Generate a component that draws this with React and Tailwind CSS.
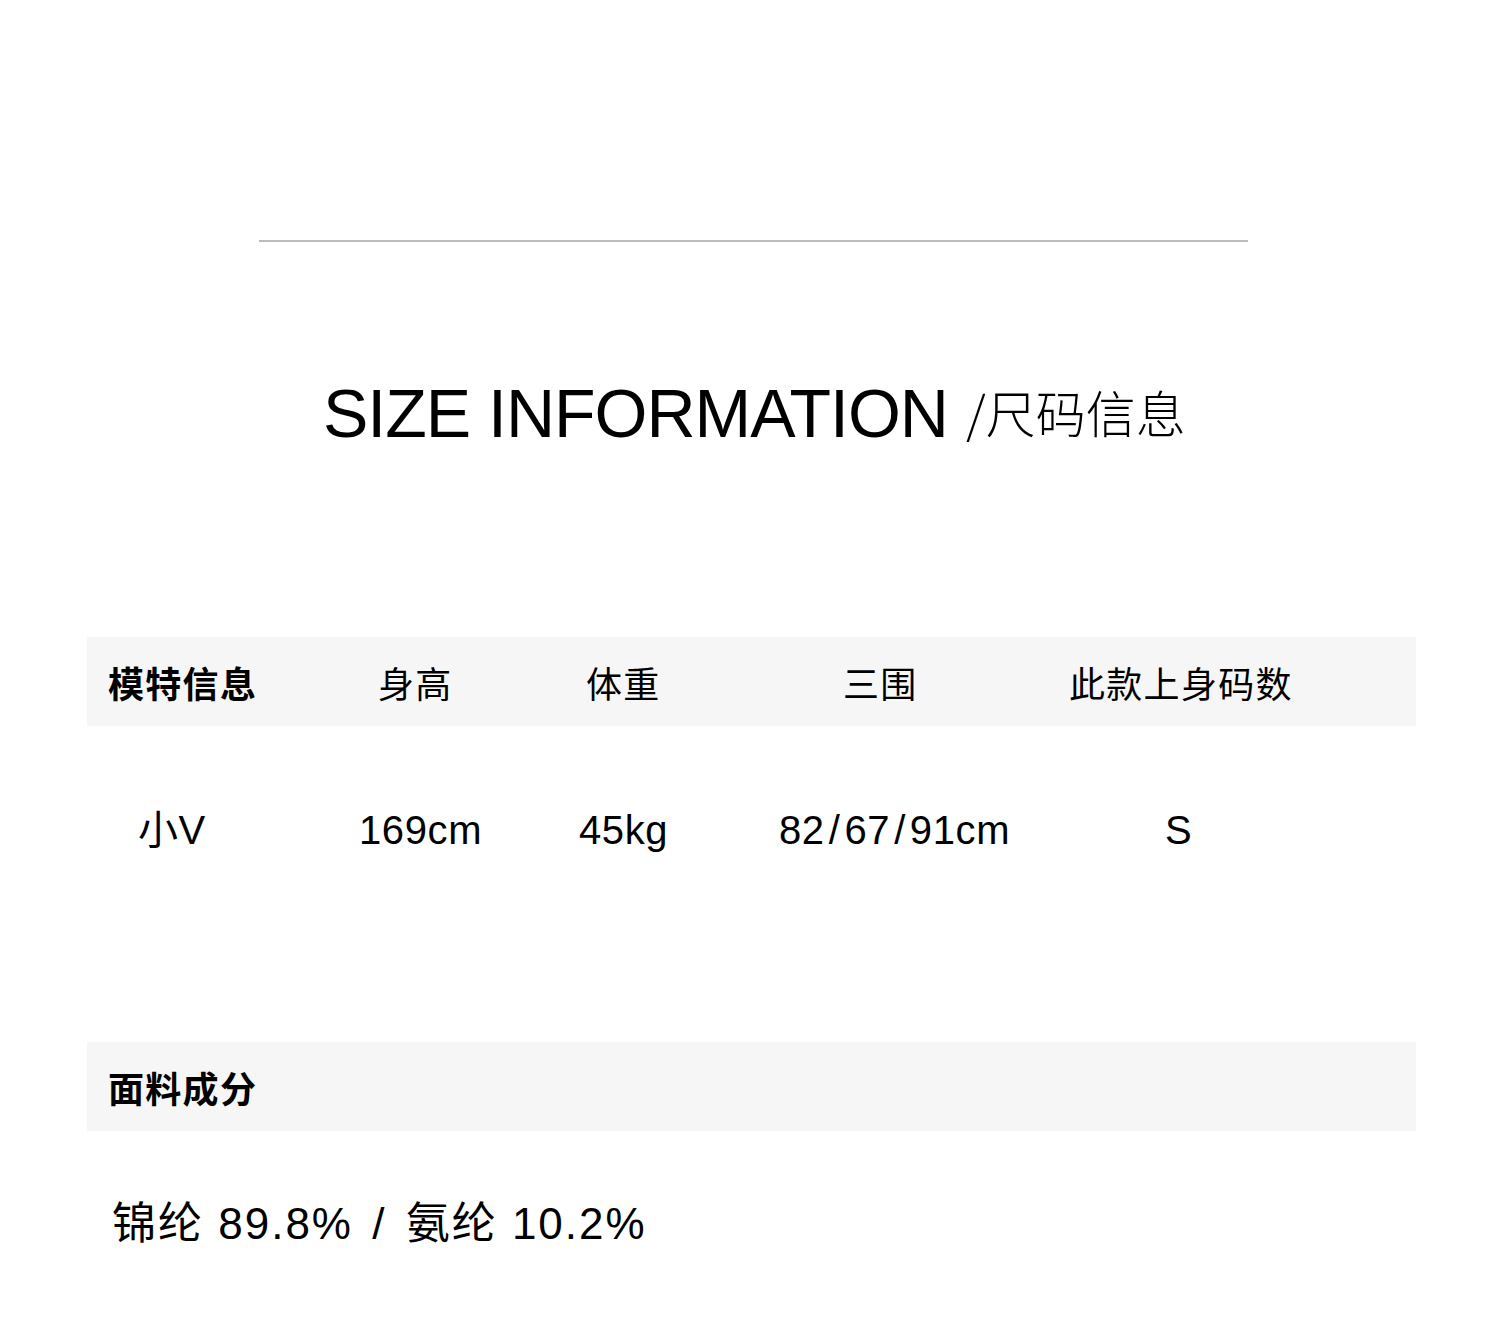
import React from "react";

const latin = "font-['Liberation_Sans','Noto_Sans_CJK_SC',sans-serif]";
const cjk = "font-['Noto_Sans_CJK_SC',sans-serif]";

const headers = [
  { label: "模特信息", w: "w-[270px]", bold: true },
  { label: "身高", w: "w-[208px]" },
  { label: "体重", w: "w-[257px]" },
  { label: "三围", w: "w-[226px]" },
  { label: "此款上身码数", w: "flex-1" },
];

const values = [
  { label: "小V", w: "w-[221px]" },
  { label: "169cm", w: "w-[220px]" },
  { label: "45kg", w: "w-[200px]" },
  { label: "82/67/91cm", w: "w-[386px]" },
  { label: "S", w: "flex-1" },
];

// slashes in the measurements sit a little wider apart
const withSlashes = (text) =>
  text.split("/").map((part, i) => (
    <React.Fragment key={i}>
      {i > 0 && <span className="mx-[4px]">/</span>}
      {part}
    </React.Fragment>
  ));

const App = () => {
  return (
    <div className="w-full h-[1328px] bg-white text-black overflow-hidden">
      {/* divider */}
      <div className="pt-[240px]">
        <div className="ml-[259px] w-[989px] h-[2px] bg-[#bdbdbd]"></div>
      </div>

      {/* title */}
      <div className="mt-[137px] pl-[323px] flex items-baseline">
        <h1 className={`${latin} text-[68px] leading-none tracking-[-1px] font-normal`}>
          SIZE INFORMATION
        </h1>
        <span className={`${cjk} ml-[18px] text-[50px] leading-none font-light -translate-y-[4px]`}>
          /尺码信息
        </span>
      </div>

      {/* model info */}
      <div className="mt-[190px] ml-[87px] w-[1329px]">
        <div className={`${cjk} h-[89px] bg-[#f6f6f6] flex items-center pl-[21px] text-[36px] leading-none tracking-[1.3px]`}>
          {headers.map((h) => (
            <div key={h.label} className={`${h.w} ${h.bold ? "font-bold" : "font-normal"}`}>
              {h.label}
            </div>
          ))}
        </div>
        <div className={`${latin} h-[208px] flex items-center pl-[51px] text-[40px] leading-none tracking-[0.6px]`}>
          {values.map((v) => (
            <div key={v.label} className={v.w}>
              {withSlashes(v.label)}
            </div>
          ))}
        </div>
      </div>

      {/* fabric */}
      <div className="mt-[108px] ml-[87px] w-[1329px]">
        <div className={`${cjk} h-[89px] bg-[#f6f6f6] flex items-center pl-[21px] text-[36px] leading-none font-bold tracking-[1.3px]`}>
          面料成分
        </div>
        <p className={`${latin} mt-[71px] pl-[25px] text-[44px] leading-none tracking-[2px]`}>
          锦纶 89.8%<span className="mx-[5px]"> / </span>氨纶 10.2%
        </p>
      </div>
    </div>
  );
};

export default App;
